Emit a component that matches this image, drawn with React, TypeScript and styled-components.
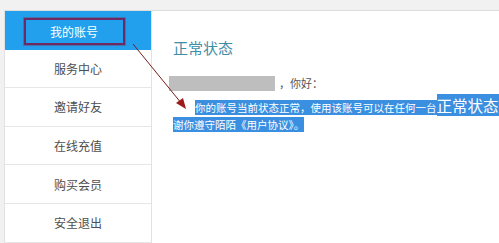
import styled, { createGlobalStyle } from 'styled-components';

const GlobalStyle = createGlobalStyle`
    html, body {
        margin: 0;
        padding: 0;
        background: #ffffff;
        overflow: hidden;
    }
    body {
        font-family: "Noto Sans CJK SC", "Noto Sans", sans-serif;
    }
`;

const Page = styled.div`
    position: relative;
    width: 499px;
    height: 243px;
    background: #f1f1f1;
    padding-top: 10px;
    box-sizing: border-box;
    overflow: hidden;
`;

const Body = styled.div`
    display: flex;
    height: 233px;
    border-top: 1px solid #dcdcdc;
    background: #ffffff;
    margin-left: 4px;
`;

const Sidebar = styled.ul`
    list-style: none;
    margin: 0;
    padding: 0;
    width: 146px;
    border-left: 1px solid #e2e2e2;
    border-right: 1px solid #e2e2e2;
    display: flex;
    flex-direction: column;
`;

const MenuItem = styled.li<{ active?: boolean }>`
    height: 38.6px;
    box-sizing: border-box;
    display: flex;
    align-items: center;
    justify-content: center;
    font-size: 12px;
    color: ${({ active }) => (active ? '#ffffff' : '#4e4e4e')};
    background: ${({ active }) => (active ? '#22a0ee' : '#ffffff')};
    border-bottom: 1px solid ${({ active }) => (active ? '#22a0ee' : '#e6e6e6')};
`;

const Boxed = styled.span`
    display: flex;
    align-items: center;
    justify-content: center;
    width: 97px;
    height: 23px;
    margin: 4px 8px 0 0;
    border: 2px solid #6e2a62;
    box-shadow: 0 0 0 1px rgba(140, 30, 60, 0.35);
`;

const Content = styled.div`
    flex: 1;
    padding: 26px 0 0 21px;
    overflow: hidden;
`;

const Title = styled.h2`
    margin: 0 0 16px;
    font-size: 15px;
    font-weight: normal;
    color: #3f8ea6;
    line-height: 22px;
`;

const Greeting = styled.div`
    display: flex;
    align-items: center;
    font-size: 11px;
    color: #555555;
    margin-left: -4px;
    height: 16px;
`;

const Blur = styled.span`
    display: inline-block;
    width: 106px;
    height: 15px;
    background: #bebebe;
    margin-right: 4px;
`;

const Paragraph = styled.p`
    margin: 6px 0 0;
    font-size: 10.5px;
    line-height: 17px;
    color: #ffffff;
    text-indent: 22px;
    white-space: nowrap;
`;

const Selected = styled.span<{ big?: boolean }>`
    background: #3a8fe0;
    font-size: ${({ big }) => (big ? '15.5px' : '10.5px')};
    padding-right: ${({ big }) => (big ? '8px' : '0')};
`;

const Arrow = styled.svg`
    position: absolute;
    left: 0;
    top: 0;
    pointer-events: none;
`;

const items = ['我的账号', '服务中心', '邀请好友', '在线充值', '购买会员', '安全退出'];

export default function App() {
    return (
        <>
            <GlobalStyle />
            <Page>
                <Body>
                    <Sidebar>
                        {items.map((label, i) => (
                            <MenuItem key={label} active={i === 0}>
                                {i === 0 ? <Boxed>{label}</Boxed> : label}
                            </MenuItem>
                        ))}
                    </Sidebar>
                    <Content>
                        <Title>正常状态</Title>
                        <Greeting>
                            <Blur />
                            ，你好：
                        </Greeting>
                        <Paragraph>
                            <Selected>你的账号当前状态正常，使用该账号可以在任何一台</Selected>
                            <Selected big>正常状态</Selected>
                            <br />
                            <Selected>谢你遵守陌陌《用户协议》。</Selected>
                        </Paragraph>
                    </Content>
                </Body>
                <Arrow width="499" height="243" viewBox="0 0 499 243">
                    <line x1="133" y1="44" x2="182" y2="104" stroke="#7a1c1c" strokeWidth="1" />
                    <polygon points="186,109 176,103 183,98" fill="#9b1b1b" />
                </Arrow>
            </Page>
        </>
    );
}
